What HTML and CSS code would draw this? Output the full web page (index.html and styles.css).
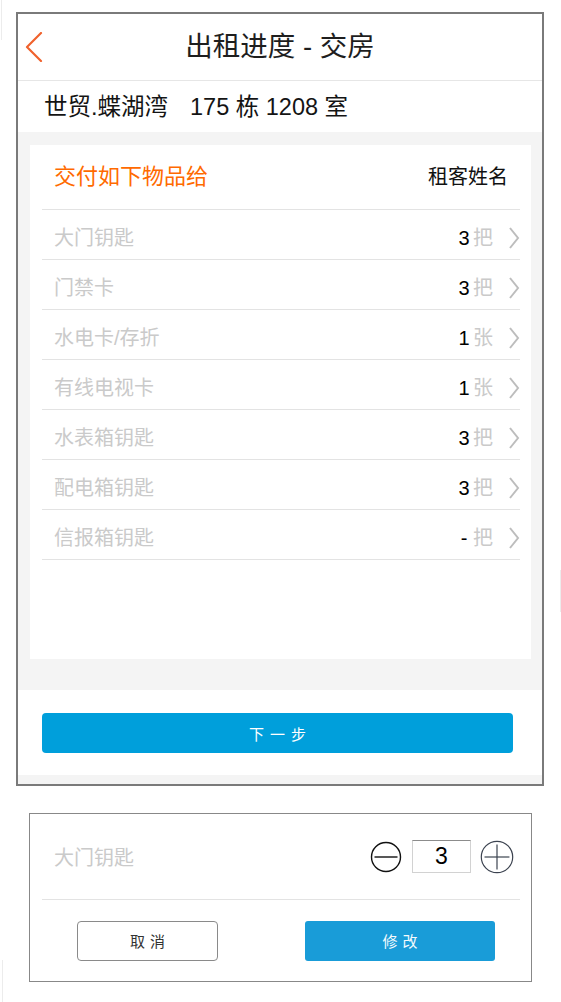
FILE: index.html
```html
<!DOCTYPE html>
<html lang="zh-CN">
<head>
<meta charset="utf-8">
<title>出租进度 - 交房</title>
<link rel="stylesheet" href="styles.css">
</head>
<body>
<div class="edge-mark edge-tl"></div>
<div class="edge-mark edge-r"></div>
<div class="edge-mark edge-bl"></div>

<div class="phone">
  <header class="topbar">
    <div class="topbar-left">
      <svg class="back" width="18" height="30" viewBox="0 0 18 30"><polyline points="16,1 2,15 16,29" fill="none" stroke="#f0622d" stroke-width="2.2" stroke-linecap="round" stroke-linejoin="round"/></svg>
    </div>
    <h1 class="title">出租进度 - 交房</h1>
    <div class="topbar-right"></div>
  </header>

  <div class="address"><span class="estate">世贸.蝶湖湾</span><span class="room">175 栋 1208 室</span></div>

  <main class="content">
    <section class="card">
      <div class="card-head">
        <span class="card-title">交付如下物品给</span>
        <span class="tenant">租客姓名</span>
      </div>
      <ul class="items">
        <li class="item"><span class="item-name">大门钥匙</span><span class="num">3</span><span class="unit">把</span><svg class="chev" width="12" height="22" viewBox="0 0 12 22"><polyline points="2,1 10,11 2,21" fill="none" stroke="#bdbdbd" stroke-width="2"/></svg></li>
        <li class="item"><span class="item-name">门禁卡</span><span class="num">3</span><span class="unit">把</span><svg class="chev" width="12" height="22" viewBox="0 0 12 22"><polyline points="2,1 10,11 2,21" fill="none" stroke="#bdbdbd" stroke-width="2"/></svg></li>
        <li class="item"><span class="item-name">水电卡/存折</span><span class="num">1</span><span class="unit">张</span><svg class="chev" width="12" height="22" viewBox="0 0 12 22"><polyline points="2,1 10,11 2,21" fill="none" stroke="#bdbdbd" stroke-width="2"/></svg></li>
        <li class="item"><span class="item-name">有线电视卡</span><span class="num">1</span><span class="unit">张</span><svg class="chev" width="12" height="22" viewBox="0 0 12 22"><polyline points="2,1 10,11 2,21" fill="none" stroke="#bdbdbd" stroke-width="2"/></svg></li>
        <li class="item"><span class="item-name">水表箱钥匙</span><span class="num">3</span><span class="unit">把</span><svg class="chev" width="12" height="22" viewBox="0 0 12 22"><polyline points="2,1 10,11 2,21" fill="none" stroke="#bdbdbd" stroke-width="2"/></svg></li>
        <li class="item"><span class="item-name">配电箱钥匙</span><span class="num">3</span><span class="unit">把</span><svg class="chev" width="12" height="22" viewBox="0 0 12 22"><polyline points="2,1 10,11 2,21" fill="none" stroke="#bdbdbd" stroke-width="2"/></svg></li>
        <li class="item"><span class="item-name">信报箱钥匙</span><span class="num">-</span><span class="unit">把</span><svg class="chev" width="12" height="22" viewBox="0 0 12 22"><polyline points="2,1 10,11 2,21" fill="none" stroke="#bdbdbd" stroke-width="2"/></svg></li>
      </ul>
    </section>
  </main>

  <div class="actions"><button class="btn-next">下一步</button></div>
  <div class="bottom-band"></div>
</div>

<div class="dialog">
  <div class="dialog-row">
    <span class="dialog-name">大门钥匙</span>
    <div class="stepper">
      <svg class="step-minus" width="32" height="32" viewBox="0 0 32 32"><circle cx="16" cy="16" r="14.5" fill="none" stroke="#111" stroke-width="1.4"/><line x1="4.5" y1="16" x2="27.5" y2="16" stroke="#111" stroke-width="1.4"/></svg>
      <div class="step-value">3</div>
      <svg class="step-plus" width="34" height="34" viewBox="0 0 34 34"><circle cx="17" cy="17" r="15.7" fill="none" stroke="#3c4350" stroke-width="1.2"/><line x1="4.5" y1="17" x2="29.5" y2="17" stroke="#3c4350" stroke-width="1.2"/><line x1="17" y1="4.5" x2="17" y2="29.5" stroke="#3c4350" stroke-width="1.2"/></svg>
    </div>
  </div>
  <div class="dialog-buttons">
    <button class="btn-cancel">取消</button>
    <button class="btn-ok">修改</button>
  </div>
</div>
</body>
</html>
```

FILE: styles.css
```css
* { box-sizing: border-box; }

html, body {
  margin: 0;
  padding: 0;
  background: #ffffff;
}

body {
  position: relative;
  width: 561px;
  min-height: 1002px;
  padding-top: 12px;
  font-family: "Liberation Sans", "Noto Sans CJK SC", sans-serif;
  color: #1a1a1a;
  overflow: hidden;
}

.edge-mark {
  position: absolute;
  width: 1px;
  background: #ececec;
}
.edge-tl { left: 1px; top: 0; height: 40px; }
.edge-r { left: 560px; top: 570px; height: 42px; }
.edge-bl { left: 2px; top: 960px; height: 42px; }

.phone {
  margin-left: 16px;
  width: 528px;
  border: 2px solid #7a7a7a;
  background: #ffffff;
  display: flex;
  flex-direction: column;
}

.topbar {
  height: 67px;
  border-bottom: 1px solid #e6e6e6;
  display: grid;
  grid-template-columns: 1fr auto 1fr;
  align-items: center;
}
.topbar-left {
  display: flex;
  align-items: center;
  padding-left: 7px;
}
.back { display: block; }
.title {
  margin: 0;
  font-size: 27.5px;
  font-weight: normal;
  line-height: 32px;
  color: #1e1e1e;
  white-space: nowrap;
}

.address {
  height: 51px;
  display: flex;
  align-items: center;
  padding-left: 26px;
  font-size: 23.5px;
  line-height: 28px;
  color: #141414;
  white-space: nowrap;
}
.address .room { margin-left: 22px; }

.content {
  background: #f4f4f4;
  padding: 13px 11px 31px 12px;
}

.card {
  background: #ffffff;
  height: 514px;
  padding: 0 11px 0 12px;
}

.card-head {
  height: 65px;
  border-bottom: 1px solid #e3e3e3;
  display: flex;
  align-items: center;
  justify-content: space-between;
  padding: 0 12px;
}
.card-title {
  font-size: 22px;
  line-height: 28px;
  color: #ff6a00;
}
.tenant {
  font-size: 20px;
  line-height: 26px;
  color: #111;
}

.items {
  list-style: none;
  margin: 0;
  padding: 0;
}
.item {
  height: 50px;
  border-bottom: 1px solid #e3e3e3;
  display: flex;
  align-items: center;
  padding: 7px 0 0 12px;
  font-size: 20px;
  line-height: 26px;
}
.item-name {
  flex: 1;
  color: #cacaca;
}
.num {
  width: 14px;
  text-align: center;
  color: #000;
  margin-right: 2px;
}
.unit {
  color: #cacaca;
}
.chev {
  display: block;
  margin-left: 15px;
}

.actions {
  padding: 23px 29px 22px 24px;
}
.btn-next {
  display: block;
  width: 100%;
  height: 40px;
  border: 0;
  border-radius: 4px;
  background: #009fdb;
  color: #ffffff;
  font-family: "Liberation Sans", "Noto Sans CJK SC", sans-serif;
  font-size: 15px;
  letter-spacing: 6px;
  padding: 0 0 0 6px;
}

.bottom-band {
  height: 9px;
  background: #f4f4f4;
}

.dialog {
  margin-top: 27px;
  margin-left: 29px;
  width: 503px;
  border: 1px solid #888888;
  padding: 0 11px 0 12px;
}

.dialog-row {
  height: 86px;
  border-bottom: 1px solid #e3e3e3;
  display: flex;
  align-items: center;
  justify-content: space-between;
  padding: 0 6px 0 12px;
}
.dialog-name {
  font-size: 20px;
  line-height: 26px;
  color: #cacaca;
  padding-top: 3px;
}
.stepper {
  display: flex;
  align-items: center;
}
.step-minus, .step-plus { display: block; }
.step-value {
  width: 59px;
  height: 33px;
  margin: 0 9px 0 10px;
  border: 1px solid #d2d2d2;
  border-top-color: #8c8c8c;
  text-align: center;
  font-size: 23px;
  line-height: 31px;
  color: #000;
}

.dialog-buttons {
  height: 81px;
  display: flex;
  align-items: center;
  padding: 0 25px 0 35px;
  justify-content: space-between;
}
.btn-cancel, .btn-ok {
  height: 40px;
  font-family: "Liberation Sans", "Noto Sans CJK SC", sans-serif;
  font-size: 15px;
  letter-spacing: 5px;
  padding: 0 0 0 5px;
}
.btn-cancel {
  width: 141px;
  border: 1px solid #8a8a8a;
  border-radius: 4px;
  background: #ffffff;
  color: #333;
}
.btn-ok {
  width: 190px;
  border: 0;
  border-radius: 3px;
  background: #199cd8;
  color: #f4fafd;
}
```
